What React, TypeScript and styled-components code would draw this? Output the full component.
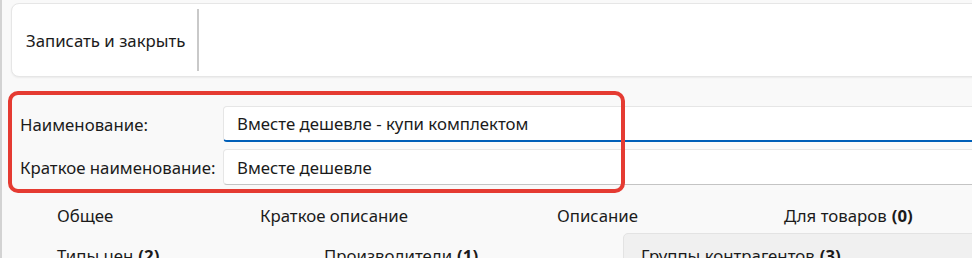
import React from "react";
import styled, { createGlobalStyle } from "styled-components";

const GlobalStyle = createGlobalStyle`
  html, body {
    margin: 0;
    padding: 0;
    background: #f9f9f9;
  }
  body {
    font-family: "Noto Sans", "Open Sans", sans-serif;
    font-size: 16.8px;
    color: #1b1b1b;
    overflow: hidden;
  }
`;

const Page = styled.div`
  position: relative;
  height: 258px;
  border-left: 2px solid #d3d3d3;
  overflow: hidden;
`;

const Toolbar = styled.div`
  display: flex;
  align-items: center;
  height: 72px;
  margin: 3px -20px 0 9px;
  background: #ffffff;
  border: 1px solid #e6e6e6;
  border-radius: 8px;
  box-shadow: 0 1px 2px rgba(0, 0, 0, 0.06);
`;

const ToolButton = styled.button`
  border: none;
  background: transparent;
  font: inherit;
  color: inherit;
  padding: 0 12px 0 14px;
  height: 100%;
  white-space: nowrap;
`;

const Separator = styled.div`
  width: 2px;
  align-self: stretch;
  margin: 5px 0;
  background: #c9c9c9;
`;

const Form = styled.div`
  display: grid;
  grid-template-columns: 203px 1fr;
  row-gap: 7px;
  margin: 29px -20px 0 18px;
  align-items: center;
`;

const Label = styled.span`
  white-space: nowrap;
`;

const Field = styled.div<{ $focused?: boolean }>`
  display: flex;
  align-items: center;
  height: ${(p) => (p.$focused ? "33px" : "34px")};
  padding-left: 13px;
  background: #ffffff;
  border: 1px solid #e6e6e6;
  border-bottom: ${(p) => (p.$focused ? "2px solid #005fb8" : "1px solid #c4c4c4")};
  border-radius: 4px 0 0 4px;
  white-space: nowrap;
`;

const Tabs = styled.div`
  display: flex;
  flex-direction: column;
  margin: 13px 0 0 37px;
`;

const TabRow = styled.div<{ $height: number }>`
  display: flex;
  height: ${(p) => p.$height}px;
`;

const Tab = styled.div<{ $width: number; $selected?: boolean }>`
  box-sizing: border-box;
  flex: none;
  width: ${(p) => p.$width}px;
  height: 100%;
  display: flex;
  align-items: center;
  padding-left: 17px;
  white-space: nowrap;
  background: ${(p) => (p.$selected ? "#f0f0f0" : "transparent")};
  border: 1px solid ${(p) => (p.$selected ? "#e3e3e3" : "transparent")};
  border-radius: 5px 5px 0 0;

  b {
    font-weight: 700;
    margin-left: 5px;
  }
`;

const Highlight = styled.div`
  position: absolute;
  left: 6px;
  top: 91px;
  width: 609px;
  height: 94px;
  border: 4px solid #e53b32;
  border-radius: 10px;
  pointer-events: none;
`;

type TabInfo = { title: string; width: number; count?: number; selected?: boolean };

const tabRows: { height: number; tabs: TabInfo[] }[] = [
  {
    height: 35,
    tabs: [
      { title: "Общее", width: 203 },
      { title: "Краткое описание", width: 297 },
      { title: "Описание", width: 227 },
      { title: "Для товаров", count: 0, width: 206 },
    ],
  },
  {
    height: 45,
    tabs: [
      { title: "Типы цен", count: 2, width: 267 },
      { title: "Производители", count: 1, width: 317 },
      { title: "Группы контрагентов", count: 3, width: 360, selected: true },
    ],
  },
];

export default function App() {
  return (
    <>
      <GlobalStyle />
      <Page>
        <Toolbar>
          <ToolButton>Записать и закрыть</ToolButton>
          <Separator />
        </Toolbar>
        <Form>
          <Label>Наименование:</Label>
          <Field $focused>Вместе дешевле - купи комплектом</Field>
          <Label>Краткое наименование:</Label>
          <Field>Вместе дешевле</Field>
        </Form>
        <Tabs>
          {tabRows.map((row, i) => (
            <TabRow key={i} $height={row.height}>
              {row.tabs.map((t) => (
                <Tab key={t.title} $width={t.width} $selected={t.selected}>
                  {t.title}
                  {t.count !== undefined && <b>({t.count})</b>}
                </Tab>
              ))}
            </TabRow>
          ))}
        </Tabs>
        <Highlight />
      </Page>
    </>
  );
}
